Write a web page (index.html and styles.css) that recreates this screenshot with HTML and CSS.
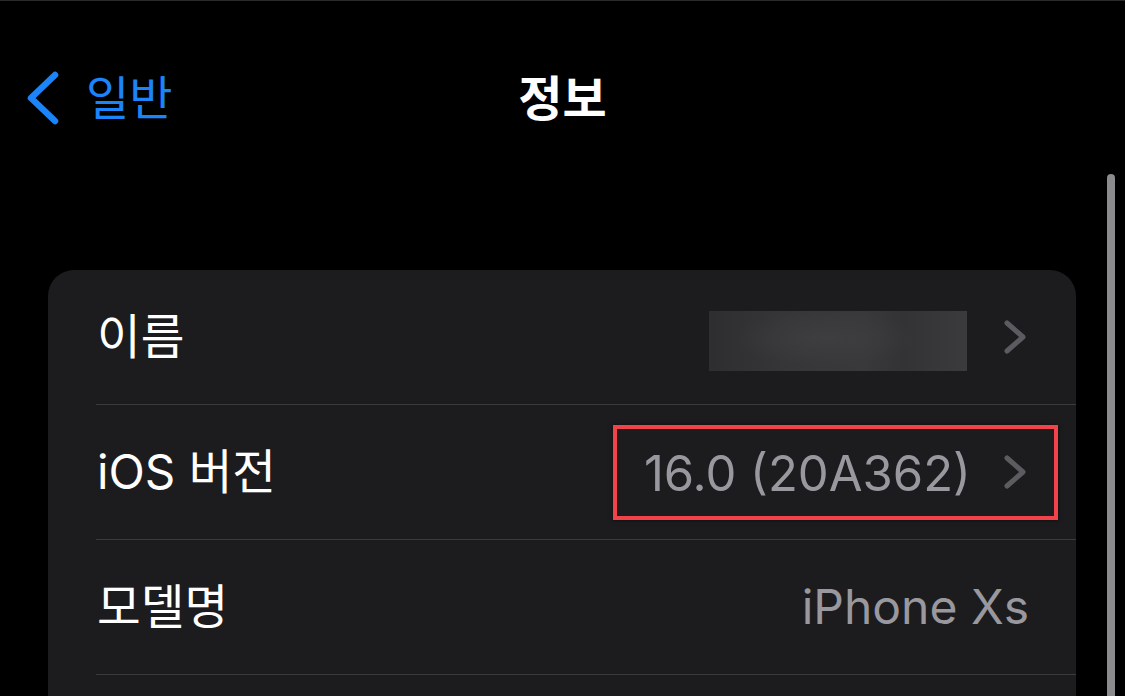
FILE: index.html
```html
<!DOCTYPE html>
<html lang="ko">
<head>
<meta charset="utf-8">
<link rel="stylesheet" href="styles.css">
</head>
<body>
<div class="screen">
  <header class="navbar">
    <div class="nav-left">
      <svg class="back-icon" width="34" height="56" viewBox="0 0 34 56"><path d="M29 5 L5 28 L29 51" fill="none" stroke="#1a84f8" stroke-width="6.5" stroke-linecap="round" stroke-linejoin="round"/></svg>
      <span class="back-label">일반</span>
    </div>
    <h1 class="nav-title">정보</h1>
    <div class="nav-right"></div>
  </header>

  <section class="card">
    <div class="row">
      <div class="row-inner">
        <span class="label">이름</span>
        <span class="value-group">
          <span class="blurred"></span>
          <svg class="chev" width="24" height="36" viewBox="0 0 24 36"><path d="M4 4 L20 18 L4 32" fill="none" stroke="#5b5b60" stroke-width="5" stroke-linecap="round" stroke-linejoin="round"/></svg>
        </span>
      </div>
    </div>
    <div class="row">
      <div class="row-inner">
        <span class="label">iOS 버전</span>
        <span class="value-group">
          <span class="value version">16.0 (20A362)</span>
          <svg class="chev" width="24" height="36" viewBox="0 0 24 36"><path d="M4 4 L20 18 L4 32" fill="none" stroke="#5b5b60" stroke-width="5" stroke-linecap="round" stroke-linejoin="round"/></svg>
        </span>
        <span class="highlight"></span>
      </div>
    </div>
    <div class="row">
      <div class="row-inner">
        <span class="label">모델명</span>
        <span class="value-group">
          <span class="value model">iPhone Xs</span>
        </span>
      </div>
    </div>
    <div class="row">
      <div class="row-inner"></div>
    </div>
  </section>

  <div class="scrollbar"></div>
</div>
</body>
</html>
```

FILE: styles.css
```css
* { box-sizing: border-box; }
html, body {
  margin: 0;
  padding: 0;
  background: #000;
}
body {
  font-family: "Inter", "Noto Sans CJK KR", sans-serif;
  color: #fff;
}
.screen {
  position: relative;
  width: 1125px;
  height: 696px;
  overflow: hidden;
  background: #000;
  border-top: 1px solid #2a2a2c;
}
.navbar {
  height: 195px;
  display: grid;
  grid-template-columns: 1fr auto 1fr;
  align-items: center;
}
.nav-left {
  display: flex;
  align-items: center;
  gap: 26px;
  padding-left: 26px;
  margin-top: -2px;
}
.back-icon { display: block; }
.back-label {
  color: #1a84f8;
  font-size: 47px;
  font-weight: 400;
  line-height: 1;
}
.nav-title {
  margin: 0;
  font-size: 48px;
  font-weight: 700;
  line-height: 1;
  color: #fff;
}
.card {
  margin-top: 74px;
  margin-left: 48px;
  width: 1028px;
  background: #1c1c1e;
  border-radius: 26px 26px 0 0;
}
.row {
  padding-left: 48px;
}
.row-inner {
  position: relative;
  height: 135px;
  display: flex;
  align-items: center;
  justify-content: space-between;
  padding-left: 1px;
  padding-right: 49px;
  border-bottom: 1px solid #3a3a3d;
}
.label {
  font-size: 47.5px;
  line-height: 1;
  color: #fff;
}
.value-group {
  display: flex;
  align-items: center;
  gap: 36px;
}
.value {
  font-size: 48px;
  line-height: 1;
  color: #98989e;
}
.value.version {
  font-size: 49px;
  margin-top: 2px;
  margin-right: -4px;
}
.value.model {
  margin-right: -2px;
}
.chev { display: block; }
.blurred {
  width: 258px;
  height: 60px;
  margin-top: 8px;
  background:
    radial-gradient(ellipse 90px 28px at 45% 45%, #3e3e41 0%, rgba(62,62,65,0) 100%),
    linear-gradient(90deg, #2e2e31 0%, #363639 30%, #39393c 60%, #333336 75%, #3b3b3e 100%);
}
.highlight {
  position: absolute;
  top: 20px;
  bottom: 19px;
  left: 517px;
  right: 18px;
  border: 4px solid #f2434a;
  box-shadow: 0 0 4px rgba(0, 0, 0, 0.6);
}
.scrollbar {
  position: absolute;
  top: 173px;
  left: 1107px;
  width: 8px;
  height: 600px;
  border-radius: 4px;
  background: #8b8b8e;
}
```
